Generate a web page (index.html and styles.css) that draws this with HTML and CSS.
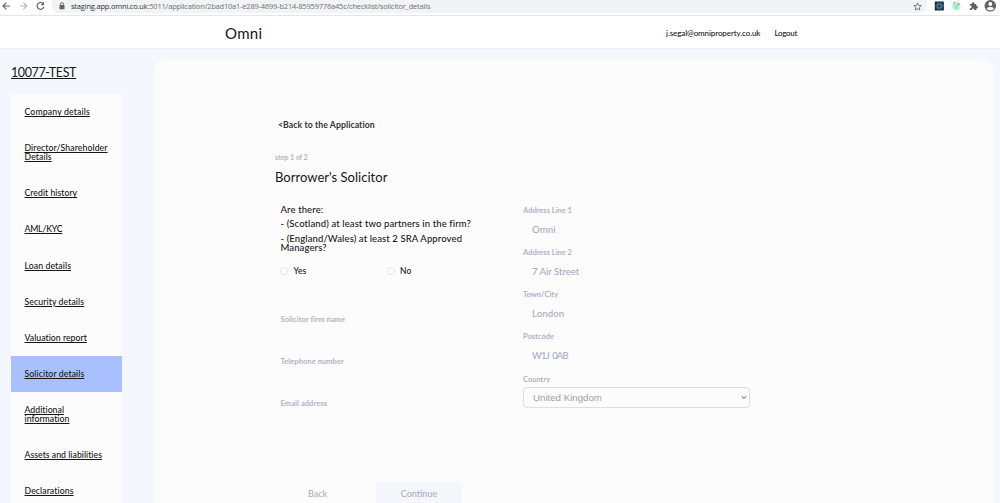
FILE: index.html
```html
<!DOCTYPE html>
<html lang="en">
<head>
<meta charset="utf-8">
<title>Solicitor details</title>
<link rel="stylesheet" href="styles.css">
</head>
<body>
<div class="browser">
  <svg class="nav" width="50" height="13" viewBox="0 0 50 13" fill="none" stroke="#5f6368" stroke-width="1.2">
    <path d="M10 6H3M6.3 2.7 3 6l3.300 3.300"/>
    <path d="M20 6h6.500M23.400 2.700 26.700 6l-3.300 3.300" stroke="#b4b7ba"/>
    <path d="M43 3.600A3.400 3.400 0 1 0 43.800 6.800"/>
    <path d="M44 1.800v3.400h-3.400z" fill="#5f6368" stroke="none"/>
  </svg>
  <div class="omnibox">
    <svg class="lock" width="6" height="8" viewBox="0 0 6 8"><path d="M1.500 3.500V2.200a1.500 1.500 0 0 1 3 0v1.300" fill="none" stroke="#5f6368" stroke-width=".9"/><rect x=".5" y="3" width="5" height="4.300" rx=".5" fill="#5f6368"/></svg>
    <span class="url"><b>staging.app.omni.co.uk</b>:5011/application/2bad10a1-e289-4699-b214-85959776a45c/checklist/solicitor_details</span>
    <svg class="star" width="9" height="9" viewBox="0 0 24 24"><path d="M12 2.500l2.900 6.600 7.100.6-5.400 4.700 1.600 7-6.200-3.700-6.200 3.700 1.600-7L2 9.700l7.100-.6z" fill="none" stroke="#5f6368" stroke-width="2.200"/></svg>
  </div>
  <svg class="ext" width="66" height="13" viewBox="0 0 66 13">
    <rect x=".8" y="1.500" width="9" height="9" fill="#1d232c"/>
    <g fill="none" stroke="#3f8fae" stroke-width=".7"><ellipse cx="5.300" cy="6" rx="3.600" ry="1.500"/><ellipse cx="5.300" cy="6" rx="3.600" ry="1.500" transform="rotate(60 5.300 6)"/><ellipse cx="5.300" cy="6" rx="3.600" ry="1.500" transform="rotate(120 5.300 6)"/></g>
    <circle cx="22.300" cy="6" r="4.300" fill="#b9f5dc"/>
    <path d="M19 4l3 2.500 3.500-2M20 8.500l2.300-2 2.700 2.500M22.300 6.500v3.500" fill="none" stroke="#67dfae" stroke-width=".7"/>
    <circle cx="20.300" cy="2.800" r=".9" fill="#ee8a58"/><circle cx="24.400" cy="4.200" r="1" fill="#ee6d58"/>
    <path d="M35.800 4h2a1.300 1.300 0 1 1 2.500 0h2v2.200a1.200 1.200 0 1 1 0 2.300V10h-2.100a1.200 1.200 0 1 0-2.300 0h-2.100V8a1.200 1.200 0 1 0 0-2.200z" fill="#5f6368"/>
    <circle cx="56.300" cy="5.800" r="5.800" fill="#5f6368"/><circle cx="56.300" cy="4" r="1.900" fill="#fff"/><path d="M52.600 8.700c.8-2.300 6.600-2.300 7.400 0-1.600 2.100-5.800 2.100-7.400 0z" fill="#fff"/>
  </svg>
</div>
<header class="header">
  <span class="logo">Omni</span>
  <nav class="account"><span class="email">j.segal@omniproperty.co.uk</span><span class="logout">Logout</span></nav>
</header>
<div class="page">
  <aside class="side">
    <div class="case"><a>10077-TEST</a></div>
    <ul class="menu">
      <li><a class="wide">Company details</a></li>
      <li><a>Director/Shareholder<br>Details</a></li>
      <li><a class="snug">Credit history</a></li>
      <li><a class="caps">AML/KYC</a></li>
      <li><a>Loan details</a></li>
      <li><a>Security details</a></li>
      <li><a class="snug">Valuation report</a></li>
      <li class="active"><a>Solicitor details</a></li>
      <li><a class="snug">Additional<br>information</a></li>
      <li><a class="snug">Assets and liabilities</a></li>
      <li><a>Declarations</a></li>
    </ul>
  </aside>
  <main class="panel">
    <div class="back-link">&lt;Back to the Application</div>
    <div class="step">step 1 of 2</div>
    <h1>Borrower's Solicitor</h1>
    <div class="cols">
      <section class="left">
        <div class="question">
          <p>Are there:</p>
          <p>- (Scotland) at least two partners in the firm?</p>
          <p>- (England/Wales) at least 2 SRA Approved<br>Managers?</p>
        </div>
        <div class="radios"><label><i></i>Yes</label><label><i></i>No</label></div>
        <div class="contact">
          <div class="label">Solicitor firm name</div>
          <div class="label">Telephone number</div>
          <div class="label">Email address</div>
        </div>
      </section>
      <section class="right">
        <div class="field"><div class="label">Address Line 1</div><div class="value">Omni</div></div>
        <div class="field"><div class="label">Address Line 2</div><div class="value street">7 Air Street</div></div>
        <div class="field"><div class="label">Town/City</div><div class="value">London</div></div>
        <div class="field"><div class="label">Postcode</div><div class="value postcode">W1J 0AB</div></div>
        <div class="field"><div class="label">Country</div>
          <div class="select"><span>United Kingdom</span><svg width="6" height="5" viewBox="0 0 6 5"><path d="M.8 1.200 3 3.400l2.200-2.200" fill="none" stroke="#8d8f96" stroke-width="1.200"/></svg></div>
        </div>
      </section>
    </div>
    <div class="actions"><span class="back">Back</span><span class="continue">Continue</span></div>
  </main>
</div>
</body>
</html>
```
FILE: styles.css
```css
* { box-sizing: border-box; }
body { margin: 0; height: 503px; overflow: hidden; background: #f4f8fe; font-family: Lato, "Open Sans", sans-serif; font-weight: 500; color: #161616; display: flex; flex-direction: column; }
.browser { height: 16px; flex: none; background: #fff; border-bottom: 1px solid #e3e6ea; display: flex; align-items: flex-start; }
.nav { flex: none; }
.omnibox { margin-left: 2px; width: 875px; height: 13px; background: #f1f3f4; border-radius: 0 0 7px 7px; display: flex; align-items: center; padding: 0 5px 1px 7px; }
.url { margin-left: 6px; font: 7.5px/11px "Open Sans", sans-serif; letter-spacing: -.2px; color: #6e7276; white-space: nowrap; }
.url b { font-weight: 400; color: #303336; }
.star { margin-left: auto; }
.ext { margin-left: 7px; flex: none; }
.header { height: 32px; flex: none; background: #fff; display: flex; align-items: center; padding: 2px 203px 0 225px; box-shadow: 0 1px 1px #edf1f7; }
.logo { font-size: 15px; font-weight: 400; letter-spacing: .3px; }
.account { margin-left: auto; display: flex; gap: 14px; font-size: 8px; letter-spacing: -.1px; }
.logout { letter-spacing: -.3px; }
.page { flex: 1; min-height: 0; display: flex; padding: 11px 6px 0 11px; }
.side { width: 111px; flex: none; display: flex; flex-direction: column; overflow: hidden; }
.case { flex: none; height: 35px; padding-top: 5px; font-size: 12.5px; line-height: 17px; font-weight: 400; letter-spacing: -.38px; }
.case a, .menu a { text-decoration: underline; text-underline-offset: 1px; text-decoration-thickness: 1px; white-space: nowrap; }
.menu { flex: 1; min-height: 0; margin: 0; padding: 0; list-style: none; background: #fcfcfc; }
.menu li { padding: 14.2px 0 13.3px 13.5px; font-size: 8.7px; line-height: 8.7px; letter-spacing: .09px; }
.menu .wide { letter-spacing: .15px; }
.menu .snug { letter-spacing: .03px; }
.menu .caps { letter-spacing: -.2px; }
.menu .active { background: #a9c0ff; }
.panel { margin-left: 32px; width: 840px; background: #fcfcfc; border-radius: 12px 12px 0 0; padding: 60px 0 0 121px; overflow: hidden; }
.back-link { height: 12px; line-height: 12px; margin-left: 3px; font-size: 8.7px; font-weight: 700; letter-spacing: .07px; color: #333; }
.step { margin-top: 21px; height: 11px; line-height: 11px; font-size: 7.3px; letter-spacing: -.15px; color: #b4b8c8; font-weight: 700; }
h1 { margin: 5px 0 0; height: 18px; line-height: 18px; font-size: 13px; font-weight: 400; letter-spacing: .02px; }
.cols { display: flex; margin-top: 18px; height: 260px; }
.left { width: 248px; padding: .5px 0 0 5.5px; flex: none; }
.question { font-size: 9.5px; line-height: 9px; height: 52px; letter-spacing: .11px; }
.question p { margin: 0 0 5.5px; white-space: nowrap; }
.radios { height: 17px; margin-top: 6px; display: flex; align-items: center; font-size: 8.5px; }
.radios label { width: 107px; display: flex; align-items: center; gap: 5.5px; margin-left: -.5px; }
.radios i { width: 8px; height: 8px; border: 1px solid #dfe4ee; border-radius: 50%; background: #fff; }
.label { font-size: 7.5px; line-height: 9px; font-weight: 700; color: #aeb3c5; }
.contact { margin-top: 35px; display: grid; grid-auto-rows: 42.1px; letter-spacing: .08px; }
.right { width: 227px; padding-top: 2.2px; }
.right .field { height: 42.1px; }
.value { padding: 9px 0 0 9px; font-size: 9.7px; line-height: 11px; letter-spacing: .06px; color: #a6acbf; }
.value.street { letter-spacing: -.08px; }
.value.postcode { font-size: 9.4px; letter-spacing: -.75px; word-spacing: 1.6px; }
.select { margin-top: 3.5px; height: 21px; border: 1px solid #dcdfe8; border-radius: 4px; display: flex; align-items: center; justify-content: space-between; padding: 0 2px 0 9px; font: 9.7px "Liberation Sans", sans-serif; color: #9fa1a6; }
.actions { display: flex; margin-top: 18px; font-size: 9px; color: #a9afc1; }
.back, .continue { height: 21px; line-height: 23px; text-align: center; }
.back { width: 85px; }
.continue { margin-left: 16px; width: 86px; background: #f4f6fb; border-radius: 4px 4px 0 0; }
```
